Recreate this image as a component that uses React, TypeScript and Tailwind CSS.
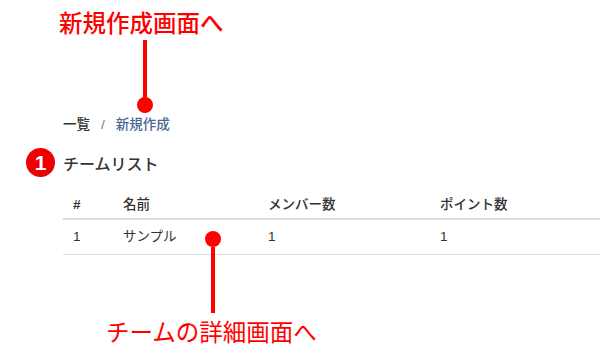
import React from "react";

const font = { fontFamily: '"Liberation Sans", "Noto Sans CJK JP", sans-serif' };

export default function App() {
  return (
    <div
      className="relative w-[611px] h-[362px] bg-white overflow-hidden"
      style={font}
    >
      <main className="pl-[63px] pr-[11px] pt-[115px]">
        <nav className="flex items-center h-[20px] text-[13.5px] leading-[20px] font-medium">
          <span className="text-[#333]">一覧</span>
          <span className="px-[11px] text-[#777]">/</span>
          <span className="text-[#4a6890]">新規作成</span>
        </nav>
        <h2 className="mt-[18px] text-[16px] leading-[24px] font-medium text-[#333]">
          チームリスト
        </h2>
        <table className="mt-[10px] w-[537px] table-fixed border-collapse text-[13.5px] leading-[20px] text-[#333]">
          <colgroup>
            <col className="w-[50px]" />
            <col className="w-[145px]" />
            <col className="w-[172px]" />
            <col className="w-[170px]" />
          </colgroup>
          <thead>
            <tr className="border-b-2 border-[#dddddd]">
              <th className="text-left font-bold px-[10px] pt-[8px] pb-[3px]">#</th>
              <th className="text-left font-medium px-[10px] pt-[8px] pb-[3px]">名前</th>
              <th className="text-left font-medium px-[10px] pt-[8px] pb-[3px]">メンバー数</th>
              <th className="text-left font-medium px-[10px] pt-[8px] pb-[3px]">ポイント数</th>
            </tr>
          </thead>
          <tbody>
            <tr className="border-b border-[#dddddd]">
              <td className="px-[10px] py-[7px]">1</td>
              <td className="px-[10px] py-[7px]">サンプル</td>
              <td className="px-[10px] py-[7px]">1</td>
              <td className="px-[10px] py-[7px]">1</td>
            </tr>
          </tbody>
        </table>
      </main>

      {/* annotation overlays */}
      <div className="absolute left-[59px] top-[12px] text-[23.5px] leading-[24px] font-medium text-[#ff0000] whitespace-nowrap">
        新規作成画面へ
      </div>
      <div className="absolute left-[143px] top-[40px] w-[4px] h-[58px] bg-[#ff0000]" />
      <div className="absolute left-[137px] top-[97px] w-[16px] h-[16px] rounded-full bg-[#ff0000]" />

      <div className="absolute left-[26px] top-[148px] w-[29px] h-[29px] rounded-full bg-[#ec0000] flex items-center justify-center text-white font-bold text-[21px] leading-none">
        1
      </div>

      <div className="absolute left-[205px] top-[231px] w-[16px] h-[16px] rounded-full bg-[#ff0000]" />
      <div className="absolute left-[211px] top-[247px] w-[4px] h-[66px] bg-[#ff0000]" />
      <div className="absolute left-[106px] top-[321px] text-[23.5px] leading-[24px] text-[#ff0000] whitespace-nowrap">
        チームの詳細画面へ
      </div>
    </div>
  );
}
